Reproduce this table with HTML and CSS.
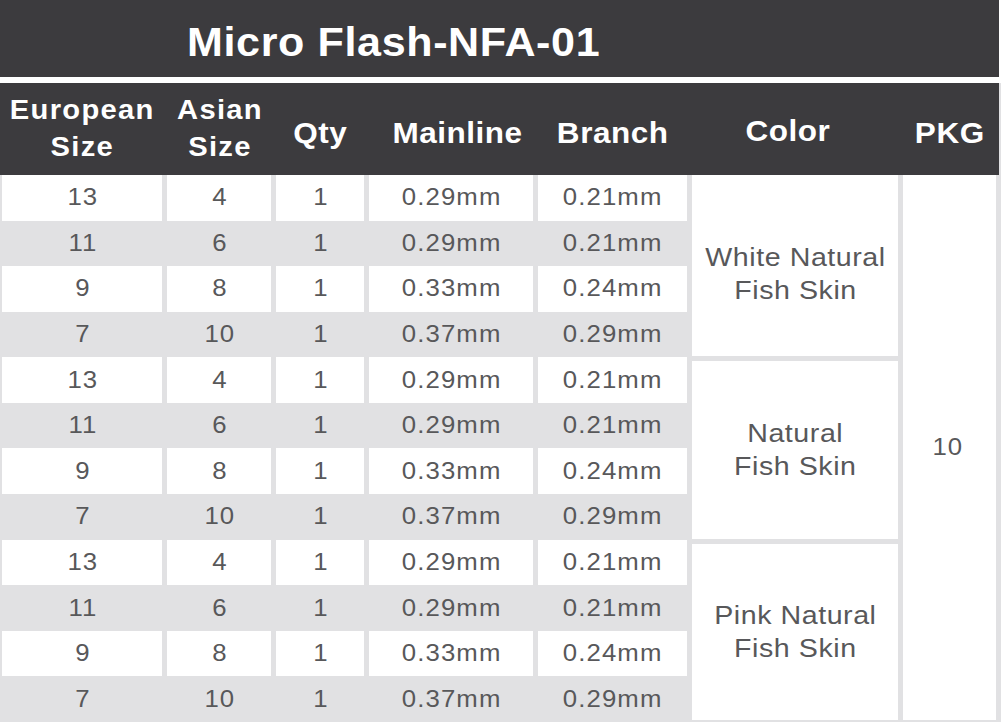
FILE: index.html
```html
<!DOCTYPE html>
<html>
<head>
<meta charset="utf-8">
<link rel="stylesheet" href="styles.css">
</head>
<body>
<div class="title"><span>Micro Flash-NFA-01</span></div>
<div class="sheet">
  <div class="head">
    <div class="hcell two"><span>European<br>Size</span></div>
    <div class="hcell two"><span>Asian<br>Size</span></div>
    <div class="hcell one"><span>Qty</span></div>
    <div class="hcell one shift-right"><span>Mainline</span></div>
    <div class="hcell one"><span>Branch</span></div>
    <div class="hcell one shift-left"><span>Color</span></div>
    <div class="hcell one"><span>PKG</span></div>
  </div>
  <div class="body">
    <div class="color g1"><span>White Natural<br>Fish Skin</span></div>
    <div class="color g2"><span>Natural<br>Fish Skin</span></div>
    <div class="color g3"><span>Pink Natural<br>Fish Skin</span></div>
    <div class="pkg"><span>10</span></div>

    <div class="cell w"><span>13</span></div><div class="cell w"><span>4</span></div><div class="cell w"><span>1</span></div><div class="cell w"><span>0.29mm</span></div><div class="cell w"><span>0.21mm</span></div>
    <div class="cell"><span>11</span></div><div class="cell"><span>6</span></div><div class="cell"><span>1</span></div><div class="cell"><span>0.29mm</span></div><div class="cell"><span>0.21mm</span></div>
    <div class="cell w"><span>9</span></div><div class="cell w"><span>8</span></div><div class="cell w"><span>1</span></div><div class="cell w"><span>0.33mm</span></div><div class="cell w"><span>0.24mm</span></div>
    <div class="cell"><span>7</span></div><div class="cell"><span>10</span></div><div class="cell"><span>1</span></div><div class="cell"><span>0.37mm</span></div><div class="cell"><span>0.29mm</span></div>

    <div class="cell w"><span>13</span></div><div class="cell w"><span>4</span></div><div class="cell w"><span>1</span></div><div class="cell w"><span>0.29mm</span></div><div class="cell w"><span>0.21mm</span></div>
    <div class="cell"><span>11</span></div><div class="cell"><span>6</span></div><div class="cell"><span>1</span></div><div class="cell"><span>0.29mm</span></div><div class="cell"><span>0.21mm</span></div>
    <div class="cell w"><span>9</span></div><div class="cell w"><span>8</span></div><div class="cell w"><span>1</span></div><div class="cell w"><span>0.33mm</span></div><div class="cell w"><span>0.24mm</span></div>
    <div class="cell"><span>7</span></div><div class="cell"><span>10</span></div><div class="cell"><span>1</span></div><div class="cell"><span>0.37mm</span></div><div class="cell"><span>0.29mm</span></div>

    <div class="cell w"><span>13</span></div><div class="cell w"><span>4</span></div><div class="cell w"><span>1</span></div><div class="cell w"><span>0.29mm</span></div><div class="cell w"><span>0.21mm</span></div>
    <div class="cell"><span>11</span></div><div class="cell"><span>6</span></div><div class="cell"><span>1</span></div><div class="cell"><span>0.29mm</span></div><div class="cell"><span>0.21mm</span></div>
    <div class="cell w"><span>9</span></div><div class="cell w"><span>8</span></div><div class="cell w"><span>1</span></div><div class="cell w"><span>0.33mm</span></div><div class="cell w"><span>0.24mm</span></div>
    <div class="cell"><span>7</span></div><div class="cell"><span>10</span></div><div class="cell"><span>1</span></div><div class="cell"><span>0.37mm</span></div><div class="cell"><span>0.29mm</span></div>
  </div>
</div>
</body>
</html>
```

FILE: styles.css
```css
html, body {
  margin: 0;
  padding: 0;
  background: #ffffff;
  font-family: "Liberation Sans", Arial, sans-serif;
}

span {
  display: inline-block;
}

.title {
  width: 812px;
  height: 70px;
  padding-top: 7px;
  padding-left: 187px;
  margin-bottom: 6px;
  line-height: 70px;
  background: #3c3b3e;
  color: #ffffff;
  font-weight: bold;
  font-size: 41px;
  white-space: nowrap;
}

.title span {
  letter-spacing: 0.6px;
  transform: scaleX(1.05);
  transform-origin: left center;
}

.sheet {
  width: 1001px;
  height: 639px;
  background: #e1e1e3;
}

.head {
  width: 997px;
  height: 92px;
  padding-left: 2px;
  background: #3c3b3e;
  display: grid;
  grid-template-columns: 160px 104px 88px 164px 149px 206px 93px;
  column-gap: 5px;
  color: #ffffff;
  font-weight: bold;
}

.hcell {
  display: flex;
  align-items: center;
  justify-content: center;
  text-align: center;
  white-space: nowrap;
}

.hcell.two {
  font-size: 27px;
  line-height: 37px;
}

.hcell.two span {
  letter-spacing: 1.2px;
  padding-left: 1.2px;
  transform: scaleX(1.08);
}

.hcell.one {
  font-size: 30px;
  line-height: 36px;
  padding-top: 7px;
}

.hcell.one span {
  letter-spacing: 0.5px;
  padding-left: 0.5px;
  transform: scaleX(1.05);
}

.hcell.shift-right {
  padding-left: 12px;
}

.hcell.shift-left {
  padding-right: 15px;
  padding-top: 4px;
}

.body {
  height: 547px;
  padding-left: 2px;
  padding-right: 5px;
  display: grid;
  grid-template-columns: 160px 104px 88px 164px 149px 206px 93px;
  grid-template-rows: repeat(12, 1fr);
  column-gap: 5px;
  color: #58585a;
}

.cell {
  display: flex;
  align-items: center;
  justify-content: center;
  font-size: 23px;
  white-space: nowrap;
}

.cell span,
.pkg span {
  letter-spacing: 1px;
  padding-left: 1px;
  transform: scaleX(1.12);
}

.cell.w {
  background: #ffffff;
}

.color {
  grid-column: 6;
  background: #ffffff;
  display: flex;
  align-items: center;
  justify-content: center;
  text-align: center;
  font-size: 26px;
  line-height: 33px;
  white-space: nowrap;
}

.color span {
  letter-spacing: 0.5px;
  padding-left: 0.5px;
  transform: scaleX(1.1);
}

.color.g1 {
  grid-row: 1 / 5;
  margin-bottom: 1px;
  padding-top: 16px;
}

.color.g2 {
  grid-row: 5 / 9;
  margin-top: 4px;
  margin-bottom: 1px;
}

.color.g3 {
  grid-row: 9 / 13;
  margin-top: 4px;
  margin-bottom: 2px;
}

.pkg {
  grid-column: 7;
  grid-row: 1 / 13;
  margin-bottom: 2px;
  background: #ffffff;
  display: flex;
  align-items: center;
  justify-content: center;
  font-size: 23px;
  padding-right: 4px;
}
```
